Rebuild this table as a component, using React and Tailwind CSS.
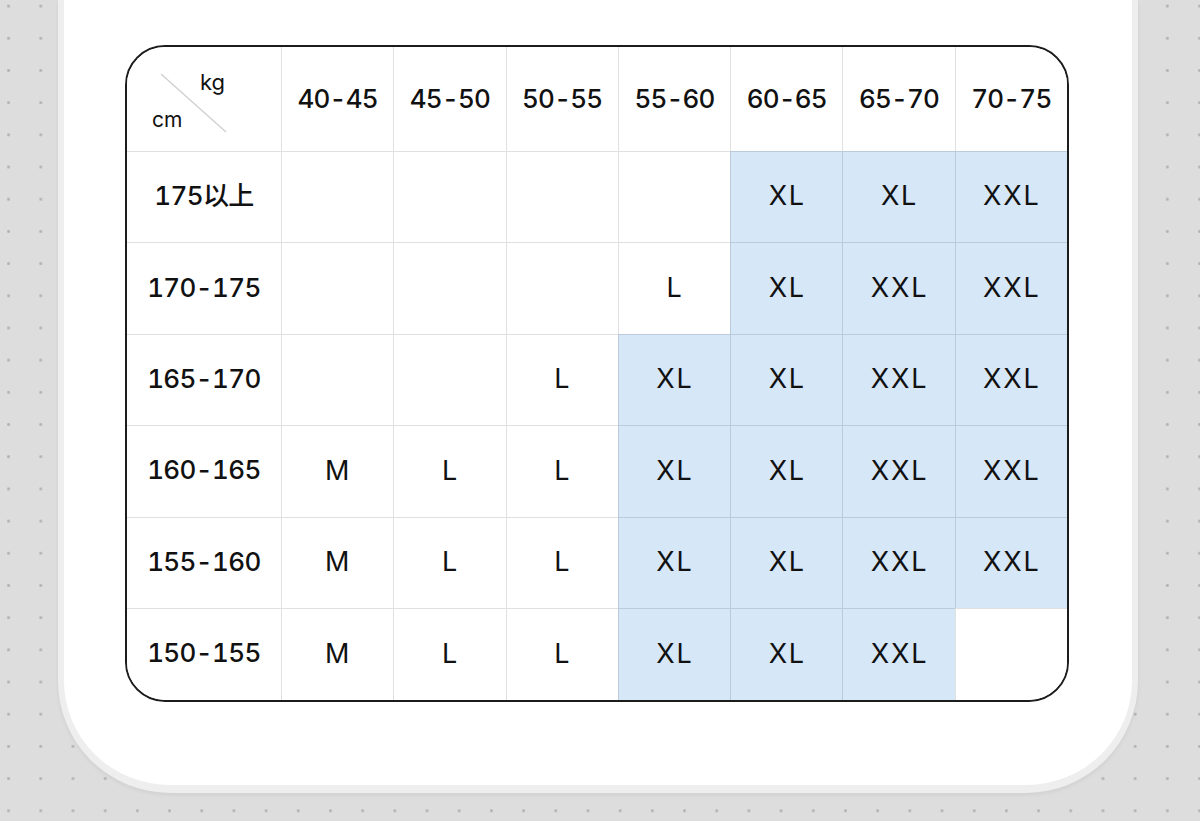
const WEIGHTS = ['40-45', '45-50', '50-55', '55-60', '60-65', '65-70', '70-75']

// '' = empty white cell, values starting with * sit on the blue area
const ROWS = [
  { h: '175以上', cells: ['', '', '', '', '*XL', '*XL', '*XXL'] },
  { h: '170-175', cells: ['', '', '', 'L', '*XL', '*XXL', '*XXL'] },
  { h: '165-170', cells: ['', '', 'L', '*XL', '*XL', '*XXL', '*XXL'] },
  { h: '160-165', cells: ['M', 'L', 'L', '*XL', '*XL', '*XXL', '*XXL'] },
  { h: '155-160', cells: ['M', 'L', 'L', '*XL', '*XL', '*XXL', '*XXL'] },
  { h: '150-155', cells: ['M', 'L', 'L', '*XL', '*XL', '*XXL', ''] },
]

const font = { fontFamily: 'Inter, "Noto Sans CJK SC", sans-serif' }

function Cell({ value, rowH }) {
  const blue = value.startsWith('*')
  const text = blue ? value.slice(1) : value
  return (
    <div
      className={`flex items-center justify-center pb-[1px] pl-[1px] text-[27px] tracking-[1.8px] text-[#111] border-t-[1.5px] border-l-[1.5px] border-black/[0.12] ${rowH} ${
        blue ? 'bg-[#d6e7f8]' : 'bg-white'
      }`}
    >
      {text}
    </div>
  )
}

export default function App() {
  return (
    <div
      style={font}
      className="w-[1200px] h-[821px] overflow-hidden bg-[#dddddd] bg-[radial-gradient(circle,#b5b5b5_1.2px,transparent_1.8px)] bg-[length:32.2px_32.2px] bg-[position:-7.5px_-10px] pl-[58px] pr-[62px]"
    >
      <div className="h-[793px] bg-white rounded-b-[112px] border-x-[6px] border-b-[8px] border-[#eeeeee] shadow-[0_2px_4px_rgba(0,0,0,0.06)] pt-[45px] pl-[61px]">
        <div className="w-[944px] rounded-[40px] border-2 border-[#1c1c1c] overflow-hidden">
          <div className="grid grid-cols-[154px_repeat(7,1fr)] tabular-nums">
            {/* header row */}
            <div className="relative h-[104px] bg-white">
              <svg className="absolute left-[33px] top-[26px]" width="68" height="60" viewBox="0 0 68 60">
                <line x1="1" y1="1" x2="66" y2="59" stroke="#cfcfcf" strokeWidth="1.3" />
              </svg>
              <span className="absolute left-[73px] top-[24px] text-[22px] text-[#111] leading-none">kg</span>
              <span className="absolute left-[25px] top-[62px] text-[21px] text-[#111] leading-none">cm</span>
            </div>
            {WEIGHTS.map((w) => (
              <div
                key={w}
                className="h-[104px] flex items-center justify-center pb-[1px] text-[26px] tracking-[-0.8px] font-medium text-[#111] border-l-[1.5px] border-black/[0.12] bg-white"
              >
                {w}
              </div>
            ))}

            {ROWS.map((row, ri) => {
              const rowH = ri === ROWS.length - 1 ? 'h-[92px]' : 'h-[91.4px]'
              return (
                <div key={row.h} className="contents">
                  <div
                    className={`flex items-center justify-center pb-[3px] text-[26px] tracking-[-0.6px] font-medium text-[#111] border-t-[1.5px] border-black/[0.12] bg-white ${rowH}`}
                  >
                    {row.h}
                  </div>
                  {row.cells.map((c, ci) => (
                    <Cell key={ci} value={c} rowH={rowH} />
                  ))}
                </div>
              )
            })}
          </div>
        </div>
      </div>
    </div>
  )
}
